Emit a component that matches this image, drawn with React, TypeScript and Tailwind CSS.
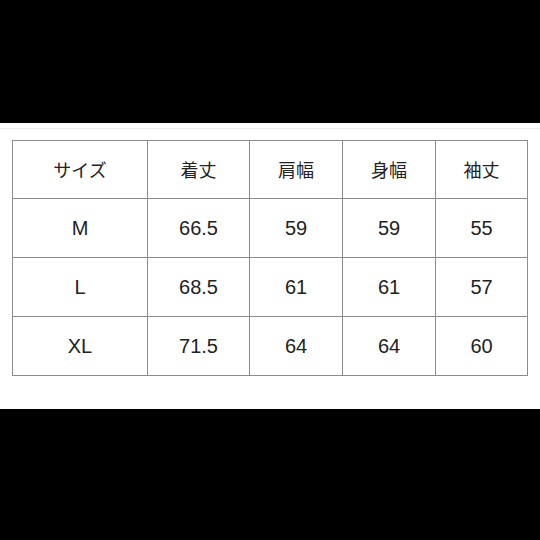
const header = ["サイズ", "着丈", "肩幅", "身幅", "袖丈"]
const rows = [
  ["M", "66.5", "59", "59", "55"],
  ["L", "68.5", "61", "61", "57"],
  ["XL", "71.5", "64", "64", "60"],
]
const widths = ["w-[135px]", "w-[102px]", "w-[93px]", "w-[93px]", "w-[92px]"]

export default function App() {
  return (
    <div className="w-[540px] h-[540px] bg-black flex flex-col">
      <div className="mt-[123px] h-[286px] bg-white">
        <div className="h-[6px] border-b border-[#ececec]"></div>
        <div className="pt-[11px] pl-[12px]">
          <div className="w-[516px] border-l border-t border-[#8c8c8c] flex flex-col text-[#222]" style={{ fontFamily: '"Liberation Sans", "Noto Sans CJK JP", sans-serif' }}>
            <div className="flex h-[58px]">
              {header.map((h, i) => (
                <div key={i} className={`${widths[i]} flex items-center justify-center border-r border-b border-[#8c8c8c] text-[18px]`} style={{ fontFamily: '"Noto Sans CJK JP", sans-serif' }}>
                  {h}
                </div>
              ))}
            </div>
            {rows.map((r, ri) => (
              <div key={ri} className="flex h-[59px]">
                {r.map((c, i) => (
                  <div key={i} className={`${widths[i]} flex items-center justify-center border-r border-b border-[#8c8c8c] text-[20px]`}>
                    {c}
                  </div>
                ))}
              </div>
            ))}
          </div>
        </div>
      </div>
    </div>
  )
}
